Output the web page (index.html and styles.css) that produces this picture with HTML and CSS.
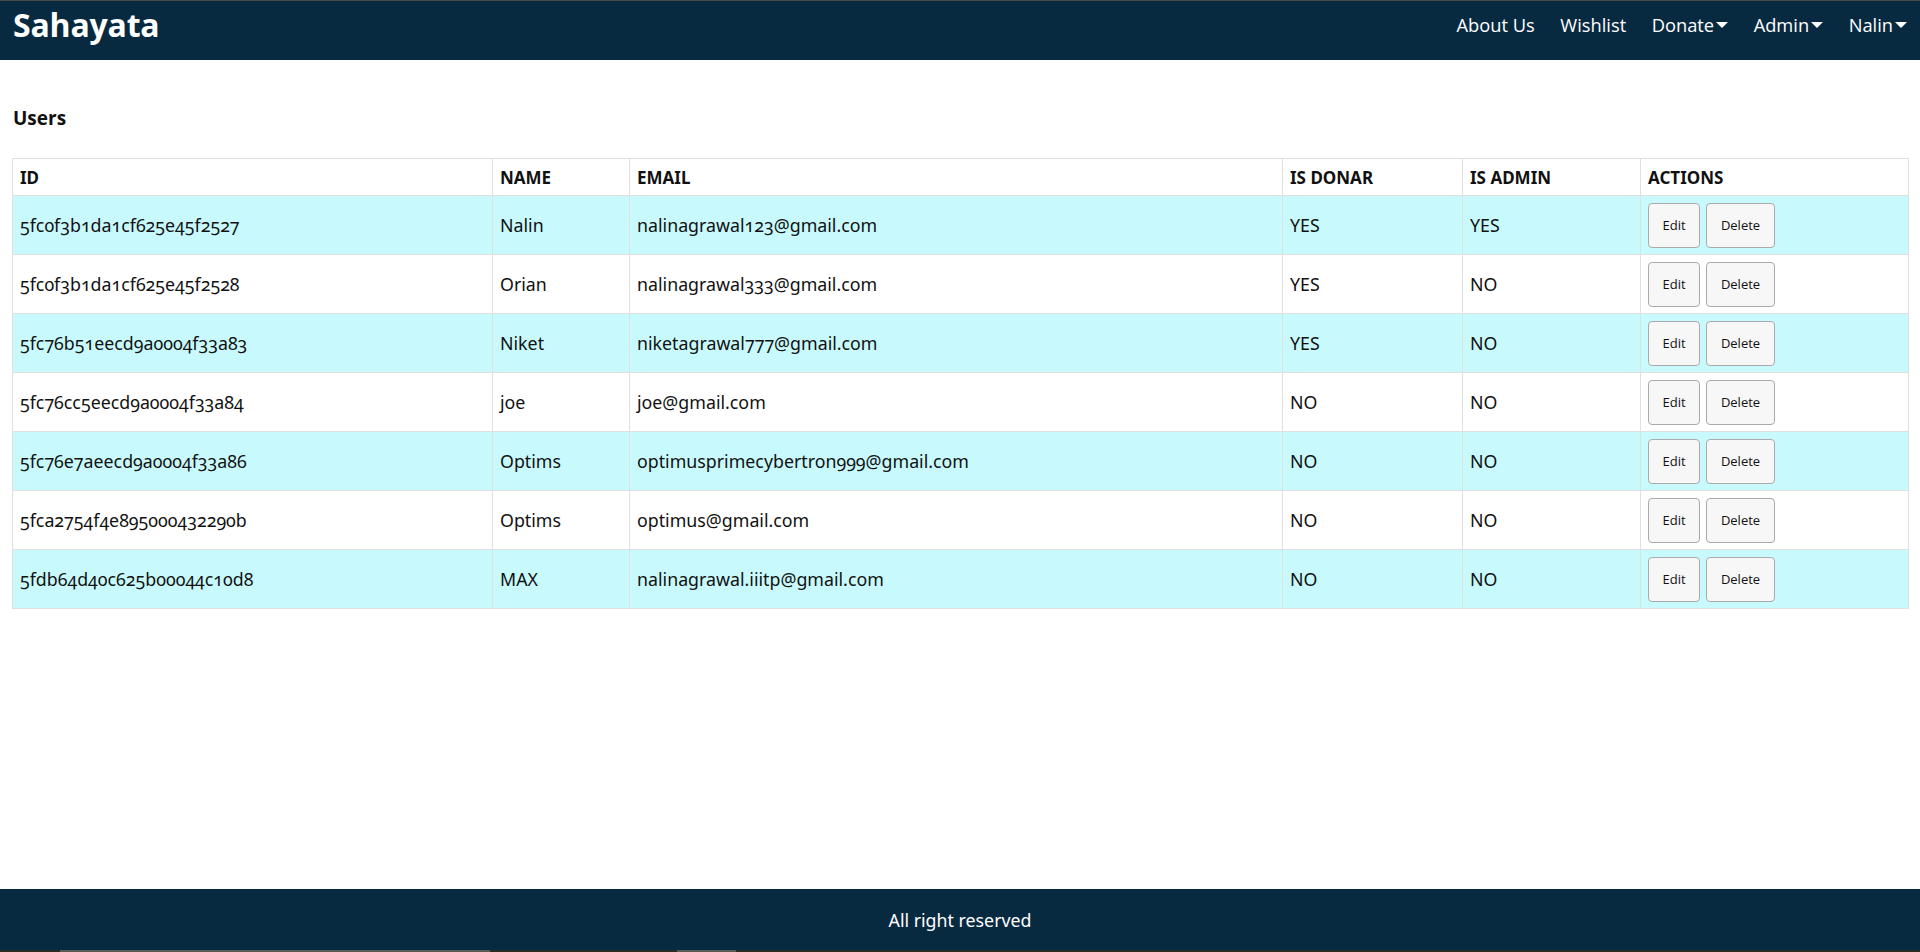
FILE: index.html
```html
<!DOCTYPE html>
<html lang="en">
<head>
<meta charset="utf-8">
<title>Sahayata</title>
<link rel="stylesheet" href="styles.css">
</head>
<body>
<div class="page">
  <header class="navbar">
    <a class="brand" href="#">Sahayata</a>
    <nav class="nav">
      <a class="nav-link" href="#">About Us</a>
      <a class="nav-link" href="#">Wishlist</a>
      <a class="nav-link dropdown" href="#">Donate<span class="caret"></span></a>
      <a class="nav-link dropdown" href="#">Admin<span class="caret"></span></a>
      <a class="nav-link dropdown" href="#">Nalin<span class="caret"></span></a>
    </nav>
  </header>

  <main class="main">
    <h1 class="title">Users</h1>
    <table class="users">
      <colgroup>
        <col class="c-id"><col class="c-name"><col class="c-email"><col class="c-donar"><col class="c-admin"><col class="c-actions">
      </colgroup>
      <thead>
        <tr><th>ID</th><th>NAME</th><th>EMAIL</th><th>IS DONAR</th><th>IS ADMIN</th><th>ACTIONS</th></tr>
      </thead>
      <tbody>
        <tr class="odd"><td>5fc0f3b1da1cf625e45f2527</td><td>Nalin</td><td>nalinagrawal123@gmail.com</td><td>YES</td><td>YES</td><td><div class="actions"><button class="btn">Edit</button><button class="btn">Delete</button></div></td></tr>
        <tr><td>5fc0f3b1da1cf625e45f2528</td><td>Orian</td><td>nalinagrawal333@gmail.com</td><td>YES</td><td>NO</td><td><div class="actions"><button class="btn">Edit</button><button class="btn">Delete</button></div></td></tr>
        <tr class="odd"><td>5fc76b51eecd9a0004f33a83</td><td>Niket</td><td>niketagrawal777@gmail.com</td><td>YES</td><td>NO</td><td><div class="actions"><button class="btn">Edit</button><button class="btn">Delete</button></div></td></tr>
        <tr><td>5fc76cc5eecd9a0004f33a84</td><td>joe</td><td>joe@gmail.com</td><td>NO</td><td>NO</td><td><div class="actions"><button class="btn">Edit</button><button class="btn">Delete</button></div></td></tr>
        <tr class="odd"><td>5fc76e7aeecd9a0004f33a86</td><td>Optims</td><td>optimusprimecybertron999@gmail.com</td><td>NO</td><td>NO</td><td><div class="actions"><button class="btn">Edit</button><button class="btn">Delete</button></div></td></tr>
        <tr><td>5fca2754f4e895000432290b</td><td>Optims</td><td>optimus@gmail.com</td><td>NO</td><td>NO</td><td><div class="actions"><button class="btn">Edit</button><button class="btn">Delete</button></div></td></tr>
        <tr class="odd"><td>5fdb64d40c625b00044c10d8</td><td>MAX</td><td>nalinagrawal.iiitp@gmail.com</td><td>NO</td><td>NO</td><td><div class="actions"><button class="btn">Edit</button><button class="btn">Delete</button></div></td></tr>
      </tbody>
    </table>
  </main>

  <footer class="footer">All right reserved</footer>
  <div class="hscroll"><span class="thumb thumb-a"></span><span class="thumb thumb-b"></span></div>
</div>
</body>
</html>
```
FILE: styles.css
```css
* { box-sizing: border-box; }
html, body { margin: 0; padding: 0; }
body {
  font-family: "Noto Sans", "Open Sans", sans-serif;
  color: #111;
  background: #fff;
}
.page {
  min-height: 100vh;
  display: flex;
  flex-direction: column;
}

/* Navbar */
.navbar {
  height: 60px;
  background: #082a41;
  border-top: 1px solid #4a4a4a;
  display: flex;
  align-items: center;
  justify-content: space-between;
  padding: 0 13px 12px 13px;
}
.brand {
  font-family: "Open Sans", sans-serif;
  font-weight: 700;
  font-size: 32px;
  color: #fff;
  text-decoration: none;
  letter-spacing: -0.2px;
}
.nav {
  display: flex;
  align-items: center;
  gap: 25.5px;
}
.nav-link {
  font-family: "Open Sans", sans-serif;
  font-size: 18.3px;
  color: #fff;
  text-decoration: none;
  display: inline-flex;
  align-items: center;
}
.caret {
  display: inline-block;
  width: 0;
  height: 0;
  margin-left: 2px;
  border-left: 6px solid transparent;
  border-right: 6px solid transparent;
  border-top: 6px solid #fff;
}

/* Main */
.main {
  padding: 43px 12px 0 12px;
}
.title {
  margin: 0 0 25px 0;
  font-family: "Open Sans", sans-serif;
  font-weight: 700;
  font-size: 19px;
  line-height: 30px;
  padding-left: 1px;
}
.users {
  width: 100%;
  border-collapse: collapse;
  table-layout: fixed;
  border: 1px solid #e0e0e0;
}
.c-id { width: 480px; }
.c-name { width: 137px; }
.c-email { width: 653px; }
.c-donar { width: 180px; }
.c-admin { width: 178px; }
.c-actions { width: 268px; }
.users th, .users td {
  border: 1px solid #e0e0e0;
  text-align: left;
  padding: 0 7px;
  vertical-align: middle;
  white-space: nowrap;
}
.users th {
  height: 37px;
  font-family: "Noto Sans", sans-serif;
  font-weight: 700;
  font-size: 17px;
  padding-top: 1px;
}
.users td {
  height: 59px;
  font-size: 17.8px;
  font-variant-numeric: oldstyle-nums;
}
.users tr.odd td { background: #c8fafd; }
.actions {
  display: flex;
  gap: 6px;
}
.btn {
  height: 45px;
  padding: 0;
  font-family: "Open Sans", sans-serif;
  font-size: 13px;
  color: #111;
  background: #f7f7f7;
  border: 1px solid #aaa;
  border-radius: 4px;
  cursor: pointer;
}
.btn:first-child { width: 52px; }
.btn:last-child { width: 69px; }

/* Footer */
.footer {
  margin-top: auto;
  height: 61px;
  background: #082a41;
  color: #fff;
  font-size: 17.8px;
  display: flex;
  align-items: center;
  justify-content: center;
}
.hscroll {
  height: 2px;
  background: #2b2b2b;
  display: flex;
}
.thumb { display: block; height: 2px; background: #5a5a5a; }
.thumb-a { margin-left: 60px; width: 430px; }
.thumb-b { margin-left: 187px; width: 59px; }
```
